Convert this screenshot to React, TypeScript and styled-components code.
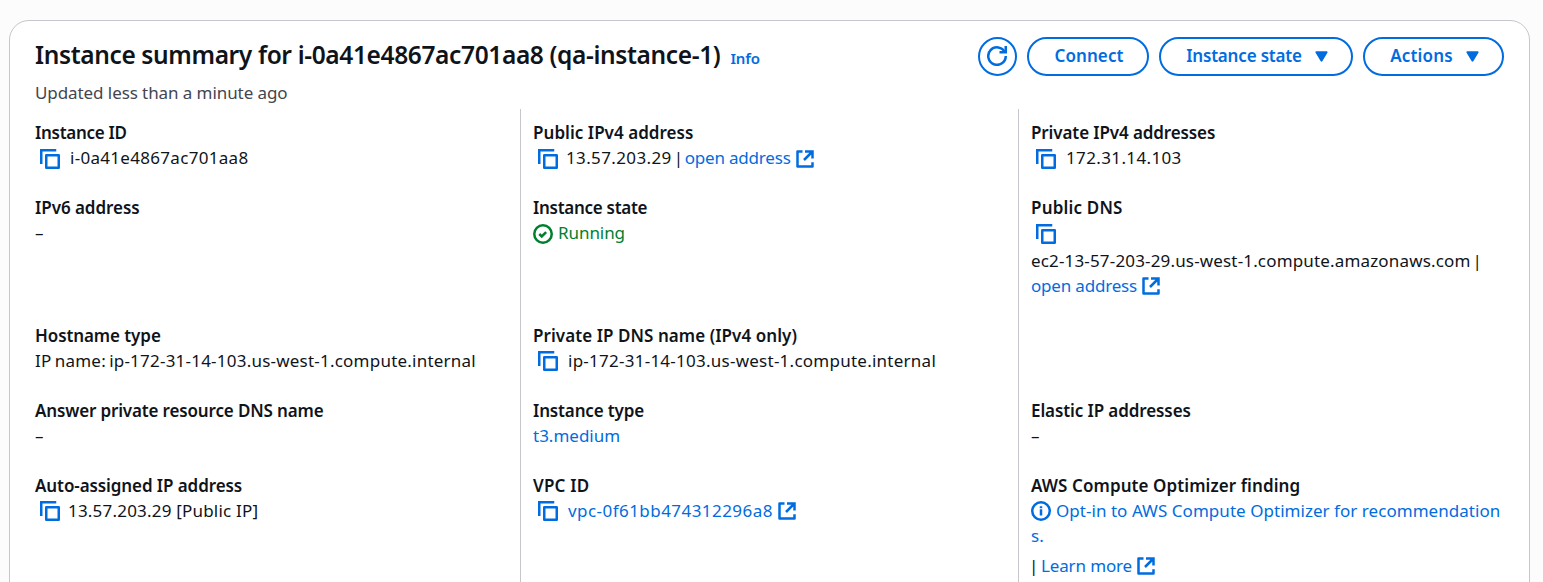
import React from 'react';
import styled, { createGlobalStyle } from 'styled-components';

const color = {
  text: '#0f141a',
  secondary: '#424650',
  link: '#006ce0',
  success: '#00802f',
  border: '#c6c6cd',
  page: '#fcfcfd',
};

const GlobalStyle = createGlobalStyle`
  *, *::before, *::after { box-sizing: border-box; }
  html, body { margin: 0; height: 100%; overflow: hidden; background: ${color.page}; }
  body {
    color: ${color.text};
    font-family: 'Noto Sans', 'Open Sans', sans-serif;
    font-size: 17px;
    line-height: 25px;
  }
`;

const Page = styled.main`
  height: 582px;
  padding: 20px 13px 0 9px;
  overflow: hidden;
`;

const Card = styled.section`
  display: flex;
  flex-direction: column;
  height: 640px;
  padding: 0 25px;
  background: #fff;
  border: 1px solid ${color.border};
  border-radius: 20px;
`;

const Header = styled.header`
  display: flex;
  justify-content: space-between;
  align-items: flex-start;
  height: 88px;
  padding-top: 15px;
`;

const Heading = styled.div`
  display: flex;
  align-items: baseline;
  gap: 10px;
  height: 44px;
`;

const Title = styled.h2`
  margin: 0;
  font-size: 24.5px;
  font-weight: 600;
  line-height: 37px;
  letter-spacing: -0.37px;
  white-space: nowrap;
`;

const InfoLink = styled.a`
  color: ${color.link};
  font-size: 15px;
  font-weight: 600;
  letter-spacing: -0.1px;
`;

const Description = styled.p`
  margin: 0;
  color: ${color.secondary};
  letter-spacing: -0.08px;
`;

const Actions = styled.div`
  display: flex;
  gap: 10px;
  margin-top: 1px;
`;

const Button = styled.button<{ $width: number; $track?: number }>`
  display: flex;
  align-items: center;
  justify-content: center;
  gap: 13px;
  width: ${p => p.$width}px;
  height: 39px;
  padding: 0 0 2px 2px;
  color: ${color.link};
  background: #fff;
  border: 2px solid ${color.link};
  border-radius: 20px;
  font: inherit;
  font-weight: 600;
  letter-spacing: ${p => p.$track ?? 0}px;
  white-space: nowrap;
`;

const Grid = styled.div`
  display: grid;
  grid-template-columns: 485px 498px 1fr;
  grid-template-rows: 86px 128px 75px 75px 1fr;
  flex: 1;
`;

const Cell = styled.div<{ $col: number; $row: number }>`
  grid-column: ${p => p.$col};
  grid-row: ${p => p.$row};
  padding-top: ${p => (p.$row === 1 ? 11 : 0)}px;
  padding-left: ${p => (p.$col === 1 ? 0 : 12)}px;
  border-left: ${p => (p.$col === 1 ? 'none' : `1px solid ${color.border}`)};

  svg {
    margin-top: ${p => (p.$row === 1 ? 3 : 1)}px;
  }
`;

const Label = styled.div<{ $track?: number }>`
  font-weight: 600;
  letter-spacing: ${p => p.$track ?? 0}px;
`;

const Value = styled.div<{ $height?: number; $spaceTop?: number }>`
  display: flex;
  align-items: center;
  height: ${p => p.$height ?? 25}px;
  margin-top: ${p => p.$spaceTop ?? 0}px;
  white-space: nowrap;
`;

const Text = styled.span<{ $track?: number; $wordGap?: number }>`
  letter-spacing: ${p => p.$track ?? 0}px;
  word-spacing: ${p => p.$wordGap ?? 0}px;
`;

const Link = styled.a<{ $track?: number }>`
  color: ${color.link};
  letter-spacing: ${p => p.$track ?? 0}px;
`;

const Status = styled.span<{ $success?: boolean; $track?: number }>`
  display: flex;
  align-items: center;
  gap: 5px;
  height: 25px;
  color: ${p => (p.$success ? color.success : color.link)};
  letter-spacing: ${p => p.$track ?? 0}px;

  && svg {
    margin-top: ${p => (p.$success ? 3 : 1)}px;
  }
`;

const Separator = styled.span<{ $before: number; $after?: number }>`
  width: 5px;
  margin: 0 ${p => p.$after ?? 7}px 0 ${p => p.$before}px;
`;

const Icon = styled.svg`
  flex: none;
  width: 20px;
  height: 20px;
  fill: none;
  stroke: currentColor;
  stroke-width: 2;
`;

const CopySvg = styled(Icon)<{ $gap: number }>`
  margin: 0 ${p => p.$gap}px 0 5px;
  color: ${color.link};
`;

const ExternalSvg = styled(Icon)`
  margin: 0 0 0 4px;
  color: ${color.link};
`;

const RefreshSvg = styled(Icon)`
  margin: 1px 3px 0 0;
`;

const CaretSvg = styled.svg`
  width: 13px;
  height: 11px;
  margin-top: 2px;
  fill: currentColor;
`;

const CopyIcon = ({ gap = 8 }: { gap?: number }) => (
  <CopySvg viewBox="0 0 16 16" $gap={gap}>
    <path d="M13 1H1v11" />
    <path d="M5 5h10v10H5z" strokeLinejoin="round" />
  </CopySvg>
);

const ExternalIcon = () => (
  <ExternalSvg viewBox="0 0 16 16">
    <path d="M6 2H2v12h12v-3.5" strokeLinejoin="round" />
    <path d="M8 2h6v5.5M14 2 7.2 8.8" />
  </ExternalSvg>
);

const RefreshIcon = () => (
  <RefreshSvg viewBox="0 0 16 16">
    <path d="M10 5h5V0" />
    <path d="M15 8a7 7 0 1 1-.7-3" />
  </RefreshSvg>
);

const CheckIcon = () => (
  <Icon viewBox="0 0 16 16">
    <circle cx="8" cy="8" r="7" />
    <path d="m5 8 2 2 3.5-3.5" />
  </Icon>
);

const InfoIcon = () => (
  <Icon viewBox="0 0 16 16">
    <circle cx="8" cy="8" r="7" />
    <path d="M8 11.5v-5M8 5.8V4.2" />
  </Icon>
);

const Caret = () => (
  <CaretSvg viewBox="0 0 13 11">
    <path d="M1.3.3h10.4c.8 0 1.2.9.7 1.5L7.3 10.2c-.4.6-1.2.6-1.6 0L.6 1.8C.1 1.2.5.3 1.3.3Z" />
  </CaretSvg>
);

interface FieldProps {
  col: number;
  row: number;
  label: string;
  track?: number;
  children: React.ReactNode;
}

const Field = ({ col, row, label, track, children }: FieldProps) => (
  <Cell $col={col} $row={row}>
    <Label $track={track}>{label}</Label>
    {children}
  </Cell>
);

export default function App() {
  return (
    <>
      <GlobalStyle />
      <Page>
        <Card>
          <Header>
            <div>
              <Heading>
                <Title>Instance summary for i-0a41e4867ac701aa8 (qa-instance-1)</Title>
                <InfoLink>Info</InfoLink>
              </Heading>
              <Description>Updated less than a minute ago</Description>
            </div>
            <Actions>
              <Button $width={39} aria-label="Refresh"><RefreshIcon /></Button>
              <Button $width={122} $track={0.08}>Connect</Button>
              <Button $width={194} $track={-0.18}>Instance state<Caret /></Button>
              <Button $width={141} $track={0.15}>Actions<Caret /></Button>
            </Actions>
          </Header>

          <Grid>
            <Field col={1} row={1} label="Instance ID" track={-0.29}>
              <Value><CopyIcon gap={10} /><Text $track={0.3}>i-0a41e4867ac701aa8</Text></Value>
            </Field>
            <Field col={2} row={1} label="Public IPv4 address" track={0.04}>
              <Value>
                <CopyIcon gap={8} />
                <Text $track={0.37}>13.57.203.29</Text>
                <Separator $before={2} $after={6}>|</Separator>
                <Link $track={-0.19}>open address</Link>
                <ExternalIcon />
              </Value>
            </Field>
            <Field col={3} row={1} label="Private IPv4 addresses" track={-0.11}>
              <Value><CopyIcon gap={10} /><Text $track={0.37}>172.31.14.103</Text></Value>
            </Field>

            <Field col={1} row={2} label="IPv6 address" track={-0.05}>
              <Value>–</Value>
            </Field>
            <Field col={2} row={2} label="Instance state" track={-0.28}>
              <Value><Status $success $track={-0.06}><CheckIcon />Running</Status></Value>
            </Field>
            <Field col={3} row={2} label="Public DNS" track={0.18}>
              <Value $height={27}><CopyIcon /></Value>
              <Value $spaceTop={1}>
                <Text $track={0.16}>ec2-13-57-203-29.us-west-1.compute.amazonaws.com</Text>
                <Separator $before={2}>|</Separator>
              </Value>
              <Value><Link $track={-0.19}>open address</Link><ExternalIcon /></Value>
            </Field>

            <Field col={1} row={3} label="Hostname type" track={-0.09}>
              <Value><Text $track={0.22} $wordGap={-1.4}>IP name: ip-172-31-14-103.us-west-1.compute.internal</Text></Value>
            </Field>
            <Field col={2} row={3} label="Private IP DNS name (IPv4 only)" track={0.06}>
              <Value><CopyIcon gap={10} /><Text $track={0.25}>ip-172-31-14-103.us-west-1.compute.internal</Text></Value>
            </Field>
            <Cell $col={3} $row={3} />

            <Field col={1} row={4} label="Answer private resource DNS name" track={-0.15}>
              <Value>–</Value>
            </Field>
            <Field col={2} row={4} label="Instance type" track={-0.14}>
              <Value><Link>t3.medium</Link></Value>
            </Field>
            <Field col={3} row={4} label="Elastic IP addresses" track={-0.1}>
              <Value>–</Value>
            </Field>

            <Field col={1} row={5} label="Auto-assigned IP address" track={-0.09}>
              <Value><CopyIcon gap={8} /><Text $track={0.2}>13.57.203.29 [Public IP]</Text></Value>
            </Field>
            <Field col={2} row={5} label="VPC ID" track={0.2}>
              <Value><CopyIcon gap={10} /><Link $track={0.45}>vpc-0f61bb474312296a8</Link><ExternalIcon /></Value>
            </Field>
            <Field col={3} row={5} label="AWS Compute Optimizer finding" track={0.08}>
              <Value>
                <Status $track={0.04}><InfoIcon />Opt-in to AWS Compute Optimizer for recommendation</Status>
              </Value>
              <Value><Link>s.</Link></Value>
              <Value $spaceTop={5}>
                <Separator $before={-2}>|</Separator>
                <Link $track={-0.14}>Learn more</Link>
                <ExternalIcon />
              </Value>
            </Field>
          </Grid>
        </Card>
      </Page>
    </>
  );
}
